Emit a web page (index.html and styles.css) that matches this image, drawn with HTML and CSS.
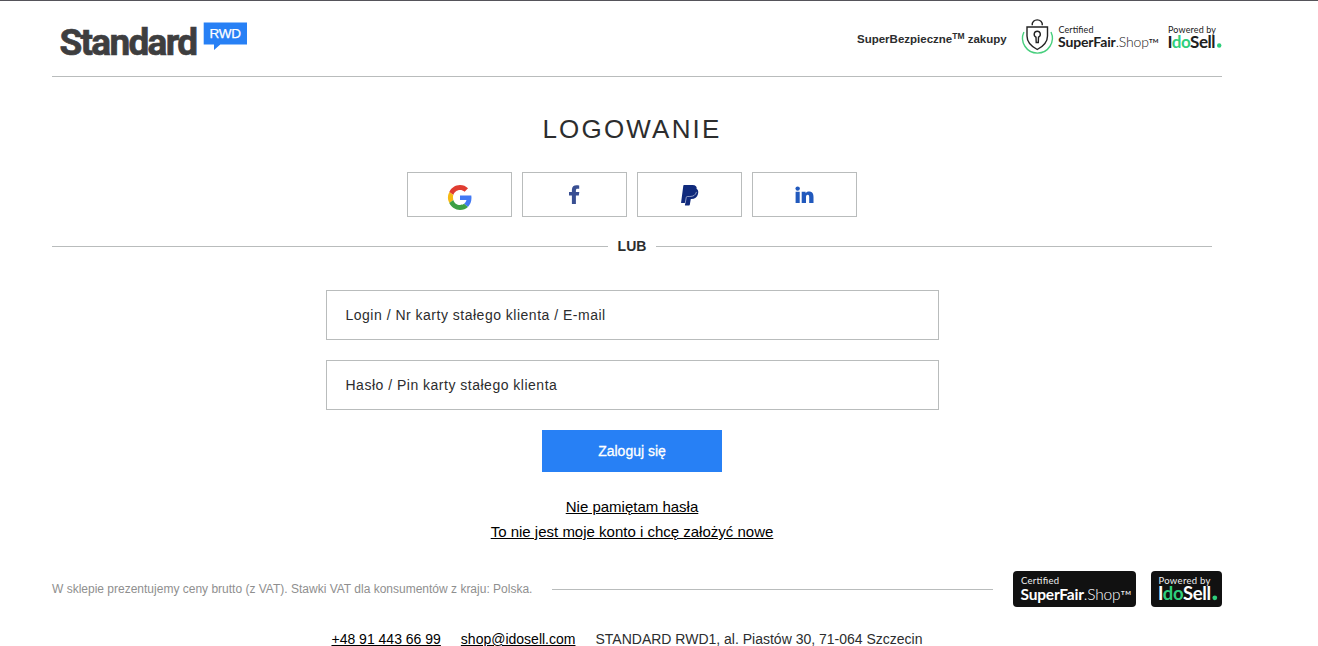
FILE: index.html
```html
<!DOCTYPE html>
<html lang="pl">
<head>
    <meta charset="UTF-8">
    <meta name="viewport" content="width=device-width, initial-scale=1.0">
    <title>Logowanie - Standard RWD</title>
    <link rel="stylesheet" href="styles.css">
</head>
<body>
<div class="container">
    <header class="header">
        <a class="logo" href="#">
            <svg width="190" height="40" viewBox="0 0 190 40">
                <text class="logo-name" x="-0.5" y="35" textLength="138.500">Standard</text>
                <path fill="#2780f5" d="M143.700 2.500h43.300v22h-26.700l-6.300 5.500v-5.500h-10.300z"/>
                <text class="logo-tag" x="149.500" y="17.500" textLength="31.500">RWD</text>
            </svg>
        </a>
        <div class="trust">
            <strong class="safe">SuperBezpieczne<sup>TM</sup> zakupy</strong>
            <svg class="shop-logo" width="138" height="40" viewBox="0 0 138 40">
                <g fill="none" stroke-width="1.4">
                    <path stroke="#47cf7d" d="M2.900 15.500A14.900 14.900 0 1 0 30 15.500" transform="translate(0 1.500)"/>
                    <path stroke="#222" d="M6 12h20.500v9c0 6-4.500 10.500-10.250 13.500C10.500 31.500 6 27 6 21zM11.200 10.300C10.500 3 22 3 21.300 10.300"/>
                    <path stroke="#222" d="M15.200 27.500l-.2-5.300c-2.900-1.400-2.200-6 1.250-6s4.150 4.600 1.250 6l-.2 5.300z"/>
                </g>
                <text class="mark-top" x="37.500" y="17.500" textLength="35">Certified</text>
                <text class="mark-shop" x="37" y="32" textLength="91"><tspan font-weight="700">SuperFair</tspan>.Shop</text>
                <text class="mark-tm" x="128" y="28" textLength="9.500">TM</text>
            </svg>
            <svg class="idosell-logo" width="55" height="40" viewBox="0 0 55 40">
                <text class="mark-top" x="1" y="17.500" textLength="48">Powered by</text>
                <text class="mark-ido" x="0.500" y="32.500" textLength="48">I<tspan class="green">do</tspan>Sell</text>
                <circle cx="52.200" cy="30.500" r="2.200" fill="#2fcf7c"/>
            </svg>
        </div>
    </header>

    <main class="login">
        <h1>Logowanie</h1>
        <div class="socials">
            <a href="#" aria-label="Google">
                <svg class="google" width="24" height="25" viewBox="0 0 48 48" preserveAspectRatio="none">
                    <path fill="#e03c31" d="M24 9.500c3.540 0 6.710 1.220 9.210 3.600l6.850-6.850C35.900 2.380 30.470 0 24 0 14.620 0 6.510 5.380 2.560 13.220l7.980 6.190C12.430 13.720 17.740 9.500 24 9.500z"/>
                    <path fill="#4279f4" d="M46.980 24.550c0-1.570-.150-3.090-.380-4.550H24v9.020h12.940c-.580 2.960-2.260 5.480-4.780 7.180l7.730 6c4.510-4.180 7.090-10.360 7.090-17.650z"/>
                    <path fill="#f6b913" d="M10.530 28.590a14.500 14.500 0 0 1 0-9.180l-7.980-6.190a24 24 0 0 0 0 21.560z"/>
                    <path fill="#3b9f45" d="M24 48c6.480 0 11.930-2.130 15.890-5.810l-7.730-6c-2.150 1.450-4.920 2.300-8.160 2.300-6.260 0-11.570-4.220-13.470-9.910l-7.980 6.190C6.510 42.620 14.620 48 24 48z"/>
                </svg>
            </a>
            <a href="#" aria-label="Facebook">
                <svg class="facebook" width="11" height="20" viewBox="0 0 11 20">
                    <path fill="#394f92" d="M2.900 19v-8.500H0V7h2.900V4.800C2.900 1.700 4.900.3 7.500.3c1.200 0 2.300.1 2.700.2v3.200H8.600C7.300 3.700 6.900 4.400 6.900 5.400V7h3.400l-.5 3.500H6.900V19z"/>
                </svg>
            </a>
            <a href="#" aria-label="PayPal">
                <svg class="paypal" width="18" height="21" viewBox="0 0 18 21">
                    <path fill="#102a7c" d="M3 0h8.500c3.200 0 4.600 1.800 4.100 3.700 1.700 1.100 2 2.900 1.400 5.300-.9 3.400-3.200 5-6.600 5H9.800l-1 5.800c-.1.500-.3.700-.8.700H4.300c-.3 0-.5-.2-.4-.5L4.300 18H.5c-.4 0-.5-.2-.4-.6L2.300.7C2.400.2 2.600 0 3 0z"/>
                    <path fill="none" stroke="#dfe3f0" stroke-width=".6" d="M4.200 18.300l1-5.700c.1-.8.500-1.100 1.200-1.100h2.400c3.500 0 5.800-1.300 6.700-4.600"/>
                </svg>
            </a>
            <a href="#" aria-label="LinkedIn">
                <svg class="linkedin" width="19" height="18" viewBox="0 0 19 18">
                    <path fill="#2159bd" d="M.6 5.800h4.100V17H.6zM6.700 5.800h3.900v1.500c.7-1.200 1.800-1.800 3.400-1.800 3.300 0 4.500 2.200 4.500 5.400V17h-4.300v-5.500c0-1.500-.2-2.700-1.500-2.700s-1.700 1.100-1.700 2.700V17H6.700z"/>
                    <circle cx="2.650" cy="2.600" r="2.200" fill="#2159bd"/>
                </svg>
            </a>
        </div>
        <div class="separator"><span>LUB</span></div>
        <form class="login-form">
            <input type="text" aria-label="Login" placeholder="Login / Nr karty stałego klienta / E-mail">
            <input type="password" aria-label="Hasło" placeholder="Hasło / Pin karty stałego klienta">
            <button type="button">Zaloguj się</button>
        </form>
        <div class="links">
            <a href="#">Nie pamiętam hasła</a>
            <a href="#">To nie jest moje konto i chcę założyć nowe</a>
        </div>
    </main>

    <footer>
        <div class="notice">
            <span class="vat">W sklepie prezentujemy ceny brutto (z VAT). Stawki VAT dla konsumentów z kraju: Polska.</span>
            <svg class="badge" width="123" height="36" viewBox="0 0 123 36">
                <text class="mark-top" x="8" y="13" textLength="38">Certified</text>
                <text class="mark-shop" x="7.500" y="28.500" textLength="100"><tspan font-weight="700">SuperFair</tspan>.Shop</text>
                <text class="mark-tm" x="108" y="24" textLength="10">TM</text>
            </svg>
            <svg class="badge" width="71" height="36" viewBox="0 0 71 36">
                <text class="mark-top" x="7.500" y="13" textLength="52">Powered by</text>
                <text class="mark-ido" x="7" y="28.800" textLength="53">I<tspan class="green">do</tspan>Sell</text>
                <circle cx="63.800" cy="26.800" r="2.400" fill="#2fcf7c"/>
            </svg>
        </div>
        <div class="contact">
            <a class="phone" href="#">+48 91 443 66 99</a>
            <a class="mail" href="#">shop@idosell.com</a>
            <span class="address">STANDARD RWD1, al. Piastów 30, 71-064 Szczecin</span>
        </div>
    </footer>
</div>
</body>
</html>
```
FILE: styles.css
```css
* {
    box-sizing: border-box;
}
body {
    margin: 0;
    border-top: 1px solid #55545a;
    background: #fff;
    color: #2c2d2e;
    font-family: "Liberation Sans", Arial, sans-serif;
    height: 646px;
    overflow: hidden;
}
svg {
    display: block;
    flex-shrink: 0;
    overflow: visible;
}
.container {
    width: 1170px;
    margin-left: 52px;
}
.header {
    display: flex;
    justify-content: space-between;
    height: 76px;
    border-bottom: 1px solid #b9bcbc;
}
.logo {
    margin: 19px 0 0 8px;
}
.logo-name {
    font: 700 37px Roboto, sans-serif;
    fill: #3e3e3f;
    stroke: #3e3e3f;
    stroke-width: .7px;
}
.logo-tag {
    font: 13.5px "Liberation Sans", Arial, sans-serif;
    fill: #fff;
    stroke: #fff;
    stroke-width: .25px;
}
.trust {
    display: flex;
    padding-top: 14px;
}
.safe {
    width: 150px;
    margin-top: 16px;
    font-size: 11.5px;
    line-height: 16px;
    white-space: nowrap;
}
.safe sup {
    font-size: 8.5px;
    line-height: 0;
    vertical-align: 4px;
}
.shop-logo {
    margin-left: 14px;
}
.idosell-logo {
    margin-left: 8px;
}
.mark-top, .mark-shop, .mark-ido, .mark-tm {
    font-family: Lato, sans-serif;
    fill: #202020;
}
.mark-top {
    font-size: 9px;
}
.mark-shop {
    font-size: 14px;
    font-weight: 300;
}
.mark-ido {
    font-size: 17px;
    font-weight: 700;
}
.mark-tm {
    font-size: 6px;
    font-weight: 700;
}
.mark-ido .green {
    fill: #2fcf7c;
}
.login {
    display: flex;
    flex-direction: column;
    align-items: center;
    width: 1160px;
}
h1 {
    margin: 37px 0 0;
    font-size: 26px;
    line-height: 30px;
    font-weight: 400;
    letter-spacing: 2.2px;
    text-transform: uppercase;
}
.socials {
    display: flex;
    gap: 10px;
    margin-top: 28px;
}
.socials a {
    display: flex;
    justify-content: center;
    align-items: flex-start;
    width: 105px;
    height: 45px;
    border: 1px solid #b9bcbc;
}
.google {
    margin: 12px 0 0 1px;
}
.facebook {
    margin-top: 12px;
}
.paypal {
    margin-top: 12px;
}
.linkedin {
    margin-top: 13px;
}
.separator {
    display: flex;
    align-items: center;
    gap: 10px;
    width: 100%;
    height: 20px;
    margin-top: 19px;
    font-size: 14px;
    font-weight: 700;
}
.separator:before, .separator:after {
    content: "";
    flex: 1;
    height: 1px;
    background: #b9bcbc;
}
.login-form {
    display: flex;
    flex-direction: column;
    align-items: center;
    gap: 20px;
    margin-top: 34px;
}
.login-form input {
    width: 613px;
    height: 50px;
    padding: 0 19px;
    border: 1px solid #b9bcbc;
    font-family: inherit;
    font-size: 14px;
    letter-spacing: .5px;
}
.login-form input::placeholder {
    color: #2c2d2e;
}
.login-form button {
    width: 180px;
    height: 42px;
    padding: 0;
    border: none;
    background: #2780f5;
    color: #fff;
    font-family: inherit;
    font-size: 14px;
    -webkit-text-stroke: .3px #fff;
    cursor: pointer;
}
.links {
    display: flex;
    flex-direction: column;
    align-items: center;
    margin-top: 22px;
    font-size: 15px;
    line-height: 25px;
}
.links a, .contact a {
    color: #000;
}
.notice {
    display: flex;
    align-items: center;
    height: 36px;
    margin-top: 27px;
}
.vat {
    display: flex;
    align-items: center;
    flex: 1;
    color: #8f8f8f;
    font-size: 12px;
    white-space: nowrap;
}
.vat:after {
    content: "";
    flex: 1;
    height: 1px;
    margin: 0 20px;
    background: #b9bcbc;
}
.badge {
    border-radius: 4px;
    background: #111;
}
.badge + .badge {
    margin-left: 15px;
}
.badge .mark-top, .badge .mark-tm {
    fill: #eee;
}
.badge .mark-shop, .badge .mark-ido {
    fill: #fff;
}
.badge .mark-top {
    font-size: 9.5px;
}
.badge .mark-shop {
    font-size: 15.5px;
}
.badge .mark-ido {
    font-size: 18.5px;
}
.contact {
    display: flex;
    justify-content: center;
    gap: 20px;
    width: 1150px;
    margin-top: 24px;
    font-size: 14px;
    line-height: 16px;
}
```
